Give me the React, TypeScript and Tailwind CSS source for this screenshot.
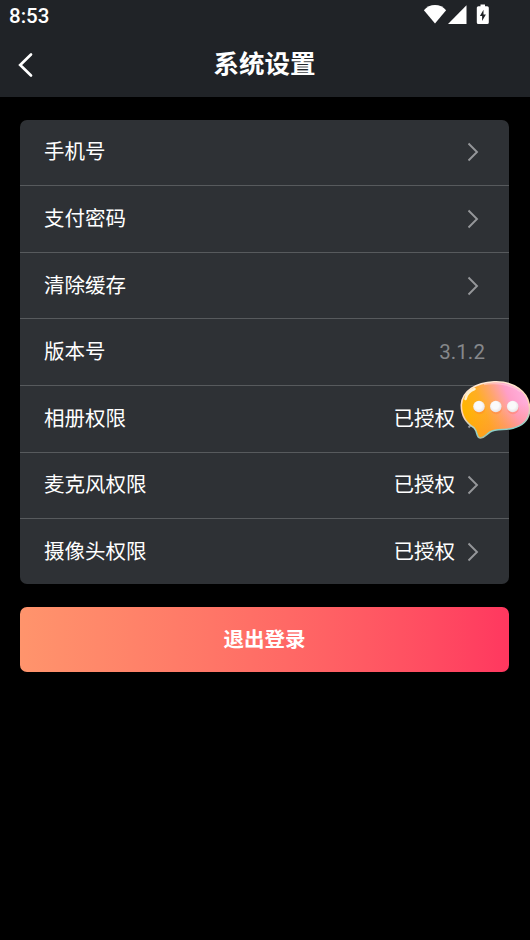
import React from "react";

type Row = { label: string; value?: string; muted?: boolean; arrow?: boolean };

const rows: Row[] = [
  { label: "手机号", arrow: true },
  { label: "支付密码", arrow: true },
  { label: "清除缓存", arrow: true },
  { label: "版本号", value: "3.1.2", muted: true },
  { label: "相册权限", value: "已授权", arrow: true },
  { label: "麦克风权限", value: "已授权", arrow: true },
  { label: "摄像头权限", value: "已授权", arrow: true },
];

function StatusBar() {
  return (
    <div className="flex h-[30px] items-start justify-between pl-[9px] pr-10">
      <span className="pt-[4px] text-[20.5px] leading-6 font-medium">8:53</span>
      <svg width="70" height="24" viewBox="0 0 70 24" className="mt-[3px]" fill="#fff">
        <path d="M15 20.500 3.900 7.200C6.600 4 10.600 2.100 15 2.100s8.400 1.900 11.100 5.100Z" />
        <path d="M46.500 2.200V21H28Z" />
        <path
          fillRule="evenodd"
          d="M60.500 1.500h4.500v1.700h2.200q1.600 0 1.600 1.600v14.700q0 1.600-1.600 1.600h-8.800q-1.600 0-1.600-1.600V4.800q0-1.600 1.600-1.600h2.100ZM63.500 6.800l-3.600 6.200h2.200v5l3.800-6.500h-2.400Z"
        />
      </svg>
    </div>
  );
}

function Chevron() {
  return (
    <svg width="12" height="20" viewBox="0 0 12 20" fill="none" className="mr-[6px] ml-3">
      <path d="M1.500 1.500 10 10l-8.500 8.500" stroke="#95979a" strokeWidth="1.900" />
    </svg>
  );
}

function ChatBubble() {
  return (
    <svg
      width="72"
      height="62"
      viewBox="0 0 72 62"
      className="absolute top-[379px] right-[-2px]"
    >
      <defs>
        <linearGradient id="body" x1="8" y1="40" x2="64" y2="16" gradientUnits="userSpaceOnUse">
          <stop offset="0" stopColor="#ffb500" />
          <stop offset=".3" stopColor="#ffae24" />
          <stop offset=".52" stopColor="#ffa56c" />
          <stop offset=".76" stopColor="#ff9fc8" />
          <stop offset="1" stopColor="#ffaedb" />
        </linearGradient>
        <linearGradient id="rim" x1="22" y1="4" x2="32" y2="62" gradientUnits="userSpaceOnUse">
          <stop offset="0" stopColor="#ffe9d6" />
          <stop offset=".5" stopColor="#ffd0b0" />
          <stop offset=".85" stopColor="#89cfc9" />
          <stop offset="1" stopColor="#d2a575" />
        </linearGradient>
        <linearGradient id="shade" x1="33" y1="28" x2="36" y2="50" gradientUnits="userSpaceOnUse">
          <stop offset="0" stopColor="#ff8a3a" stopOpacity="0" />
          <stop offset="1" stopColor="#ff8040" stopOpacity=".3" />
        </linearGradient>
        <radialGradient id="dot" cx=".45" cy=".4" r=".6">
          <stop offset=".5" stopColor="#fafafa" />
          <stop offset="1" stopColor="#e6e1e4" />
        </radialGradient>
      </defs>
      <path
        id="outline"
        d="M34 2.800C53 2 69 12.500 69.600 29 70 40 63 46.500 53 49.200 44 51.500 36 49.500 30 53c-4 2.500-5.500 6-9.500 6-4.500 0-2.500-6-6.500-10.300C6 44 1.300 36 1.300 26 2 12 16 3.600 34 2.800Z"
        fill="url(#body)"
        stroke="url(#rim)"
        strokeWidth="1.600"
      />
      <path
        d="M34 3.600C53 3 68 13 68.800 29 69 40 62 46 53 48.400 44 50.500 35 49 29.500 52.300c-4 2.500-5.500 5.800-9 5.800-3.700 0-1.700-6-6-10C6.500 43.500 2 36 2.100 26 3 12.500 16 4.400 34 3.600Z"
        fill="url(#shade)"
      />
      <path
        d="M5.500 20C6.500 15 10 11.500 14.500 10"
        fill="none"
        stroke="#fff1cf"
        strokeWidth="2.600"
        strokeLinecap="round"
      />
      <path d="M24 5.500c12-2.500 26-.5 36 7" fill="none" stroke="#ffd8df" strokeWidth="1.500" opacity=".5" />
      <g fill="#ff7138" opacity=".3">
        <circle cx="19.500" cy="29.500" r="5.800" />
        <circle cx="36.300" cy="29.500" r="5.800" />
        <circle cx="53" cy="29.500" r="5.800" />
      </g>
      <g fill="url(#dot)">
        <circle cx="19" cy="27.500" r="5.800" />
        <circle cx="35.800" cy="27.500" r="5.800" />
        <circle cx="52.700" cy="27.500" r="5.800" />
      </g>
    </svg>
  );
}

export default function App() {
  return (
    <div className="relative h-[940px] w-[530px] overflow-hidden bg-black font-[Roboto,'Noto_Sans_CJK_SC',sans-serif] text-white">
      <header className="h-[97px] bg-[#202327]">
        <StatusBar />
        <div className="grid h-[67px] grid-cols-[60px_1fr_61px] items-center">
          <button aria-label="返回" className="mt-[3px] ml-[16px] w-fit">
            <svg width="18" height="26" viewBox="0 0 18 26" fill="none">
              <path d="M15 2.500 4.200 13 15 23.500" stroke="#fff" strokeWidth="2.700" strokeLinecap="round" />
            </svg>
          </button>
          <h1 className="text-center text-[25.500px] leading-9 font-bold">系统设置</h1>
        </div>
      </header>
      <main className="pt-[22.500px] pr-[21px] pl-5">
        <section className="overflow-hidden rounded-[7px] bg-[#2e3135]">
          {rows.map((row) => (
            <div
              key={row.label}
              className="flex h-[66.640px] items-center border-b border-[#575a5d] px-6 text-[20.500px] leading-[30px] last:h-[65.160px] last:border-0"
            >
              <span className="mr-auto">{row.label}</span>
              {row.value && (
                <span className={row.muted ? "tracking-[0.1px] text-[#86888b]" : ""}>{row.value}</span>
              )}
              {row.arrow && <Chevron />}
            </div>
          ))}
        </section>
        <button className="mt-[22.500px] flex h-[65px] w-full items-center justify-center rounded-[7px] bg-linear-to-r from-[#ff946c] to-[#ff375f] pt-px text-[20.500px] font-bold">
          退出登录
        </button>
      </main>
      <ChatBubble />
    </div>
  );
}
